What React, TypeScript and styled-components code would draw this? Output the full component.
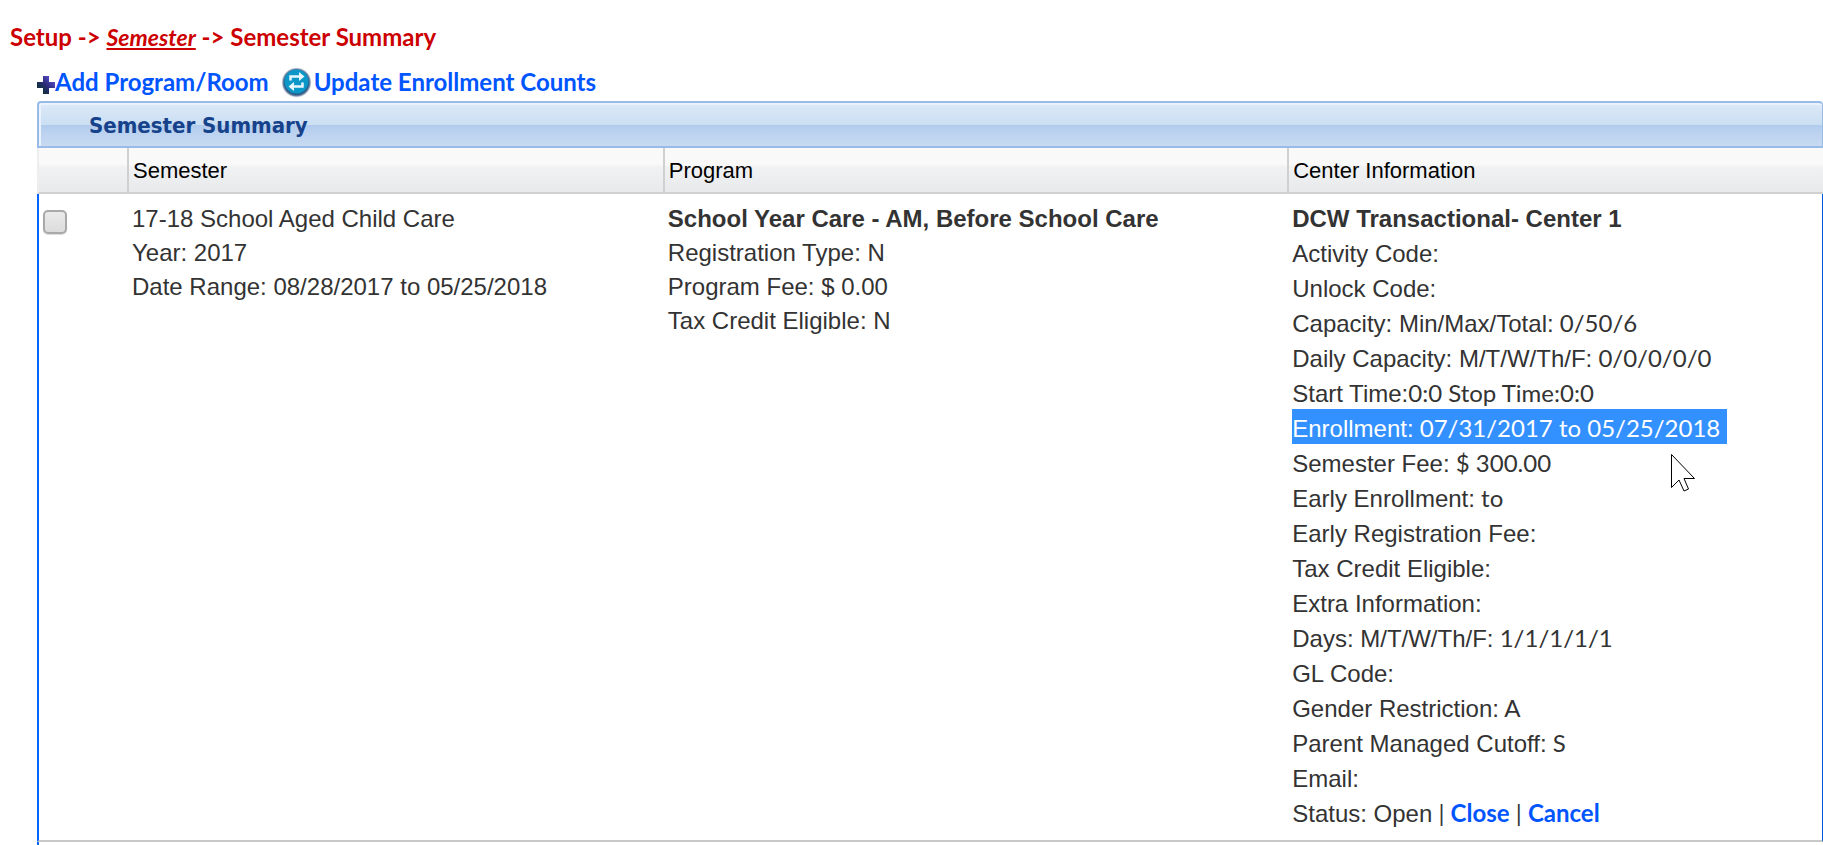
import React from "react";
import styled, { createGlobalStyle, css } from "styled-components";

const sans = `"Liberation Sans", Arial, sans-serif`;
const lato = `Lato, "Liberation Sans", sans-serif`;

const GlobalStyle = createGlobalStyle`
  *, *::before, *::after { box-sizing: border-box; }
  html { height: 100%; overflow: hidden; }
  body { margin: 0; background: #fff; color: #333; font-family: ${sans}; font-size: 24px; }
`;

const Page = styled.main`
  padding-left: 10px;
`;

const Breadcrumb = styled.nav`
  padding-top: 20px;
  font: 700 24px/34px ${lato};
  color: #cc0000;
`;

const CrumbLink = styled.a`
  color: inherit;
  font-size: 23px;
  font-style: italic;
  text-decoration: underline;
`;

const Panel = styled.section`
  padding: 10px 0 0 27px;
`;

const Toolbar = styled.div`
  display: flex;
  gap: 12px;
  height: 37px;
`;

const ToolLink = styled.a`
  display: flex;
  align-items: center;
  height: 36px;
  font: 700 24px/36px ${lato};
  color: #0055ff;
  text-decoration: none;
`;

const TitleBar = styled.h1`
  margin: 0;
  height: 47px;
  padding-left: 50px;
  border: 2px solid #99bbe8;
  border-right-width: 1px;
  border-radius: 4px 4px 0 0;
  box-shadow: inset 2px 2px 0 #eaf2fb;
  background: linear-gradient(#dce9f8, #cbdff3 50%, #b0caec 51%, #b8d0ef 62%, #c8daf2);
  font: 700 22px/46px "DejaVu Sans Condensed", "DejaVu Sans", Tahoma, sans-serif;
  color: #15428b;
`;

const Grid = styled.table`
  width: 100%;
  table-layout: fixed;
  border-collapse: separate;
  border-spacing: 0;
`;

const Col = styled.col<{ $w: string }>`
  width: ${(p) => p.$w};
`;

const HeadCell = styled.th<{ $first?: boolean }>`
  height: 46px;
  padding: 2px 4px 0;
  border-left: ${(p) => (p.$first ? "2px solid #eee" : "2px solid #d0d0d0")};
  border-bottom: 2px solid #d0d0d0;
  background: linear-gradient(#f9f9f9, #f9f9f9 38%, #f1f2f3 42%, #e8e9eb);
  font: 400 22px/42px ${sans};
  color: #000;
  text-align: left;
`;

const Cell = styled.td<{ $kind?: "first" | "last" }>`
  padding: 8px 0 11px 5px;
  border-bottom: 2px solid #c8c8c8;
  vertical-align: top;
  ${(p) => p.$kind === "first" && css`
    padding-top: 16px;
    padding-left: 4px;
    border-left: 2px solid #0066ff;
  `}
  ${(p) => p.$kind === "last" && css`
    padding-top: 5px;
    border-right: 1px solid #0055dd;
  `}
`;

const NextRow = styled.td`
  height: 4px;
  padding: 0;
  border-left: 2px solid #0066ff;
`;

const Check = styled.input`
  appearance: none;
  display: block;
  width: 24px;
  height: 24px;
  margin: 0;
  border: 2px solid #a9a9a9;
  border-radius: 5px;
  background: linear-gradient(#eaeaea, #dcdcdc);
  box-shadow: 0 1px 1px #ddd;
`;

const Line = styled.div<{ $bold?: boolean }>`
  height: 34px;
  line-height: 34px;
  font-weight: ${(p) => (p.$bold ? 700 : 400)};
  white-space: nowrap;
`;

const CenterLine = styled.div`
  height: 35px;
  font: 400 24px/37px ${lato};
  white-space: nowrap;
`;

const Label = styled.span<{ $bold?: boolean }>`
  font-family: ${sans};
  font-weight: ${(p) => (p.$bold ? 700 : 400)};
`;

const Selected = styled.mark`
  position: relative;
  display: block;
  width: fit-content;
  height: 35px;
  padding-right: 7px;
  background: #3390ff;
  color: #fff;
`;

const Pointer = styled.svg`
  position: absolute;
  top: 44px;
  right: 31px;
`;

const StatusLink = styled.a`
  font-weight: 700;
  color: #0055ff;
  text-decoration: none;
`;

const PlusIcon = () => (
  <svg width="18" height="24" viewBox="0 0 18 24" aria-hidden="true">
    <defs>
      <linearGradient id="plus" x1="0" y1="1" x2="1" y2="0">
        <stop offset="0.2" stopColor="#10303a" />
        <stop offset="0.5" stopColor="#2c2a78" />
        <stop offset="1" stopColor="#6a5cf0" />
      </linearGradient>
    </defs>
    <path d="M6 6h6v6h6v6h-6v6H6v-6H0v-6h6z" fill="url(#plus)" />
  </svg>
);

const RefreshIcon = () => (
  <svg width="33" height="32" viewBox="0 0 33 32" aria-hidden="true">
    <defs>
      <radialGradient id="halo">
        <stop offset="0.78" stopColor="#2c5c86" />
        <stop offset="0.88" stopColor="#7b91ad" />
        <stop offset="1" stopColor="#fff" stopOpacity="0" />
      </radialGradient>
    </defs>
    <circle cx="15.500" cy="16.500" r="15.500" fill="url(#halo)" />
    <circle cx="15.500" cy="15.500" r="12" fill="#0c97c9" />
    <g fill="none" stroke="#e6f7ff" strokeWidth="2.500">
      <path d="M9.500 14.500V10.500H20" />
      <path d="M21.500 16.500V20.500H11" />
    </g>
    <path d="M18 6l5.500 4.500L18 15zM13 16l-5.500 4.500L13 25z" fill="#e6f7ff" />
  </svg>
);

const details: [string, string][] = [
  ["Activity Code:", ""],
  ["Unlock Code:", ""],
  ["Capacity: Min/Max/Total:", "0/50/6"],
  ["Daily Capacity: M/T/W/Th/F:", "0/0/0/0/0"],
];

const moreDetails: [string, string][] = [
  ["Semester Fee:", "$ 300.00"],
  ["Early Enrollment:", "to"],
  ["Early Registration Fee:", ""],
  ["Tax Credit Eligible:", ""],
  ["Extra Information:", ""],
  ["Days: M/T/W/Th/F:", "1/1/1/1/1"],
  ["GL Code:", ""],
  ["Gender Restriction:", "A"],
  ["Parent Managed Cutoff:", "S"],
  ["Email:", ""],
];

const Detail = ({ label, value }: { label: string; value: string }) => (
  <CenterLine>
    <Label>{label}</Label> {value}
  </CenterLine>
);

export default function App() {
  return (
    <Page>
      <GlobalStyle />
      <Breadcrumb aria-label="Breadcrumb">
        Setup -&gt; <CrumbLink href="#semester">Semester</CrumbLink> -&gt; Semester Summary
      </Breadcrumb>
      <Panel>
        <Toolbar>
          <ToolLink href="#add"><PlusIcon />Add Program/Room</ToolLink>
          <ToolLink href="#update"><RefreshIcon />Update Enrollment Counts</ToolLink>
        </Toolbar>
        <TitleBar>Semester Summary</TitleBar>
        <Grid>
          <colgroup>
            <Col $w="90px" />
            <Col $w="30%" />
            <Col $w="auto" />
            <Col $w="30%" />
          </colgroup>
          <thead>
            <tr>
              <HeadCell $first />
              <HeadCell>Semester</HeadCell>
              <HeadCell>Program</HeadCell>
              <HeadCell>Center Information</HeadCell>
            </tr>
          </thead>
          <tbody>
            <tr>
              <Cell $kind="first">
                <Check type="checkbox" aria-label="Select 17-18 School Aged Child Care" />
              </Cell>
              <Cell>
                <Line>17-18 School Aged Child Care</Line>
                <Line>Year: 2017</Line>
                <Line>Date Range: 08/28/2017 to 05/25/2018</Line>
              </Cell>
              <Cell>
                <Line $bold>School Year Care - AM, Before School Care</Line>
                <Line>Registration Type: N</Line>
                <Line>Program Fee: $ 0.00</Line>
                <Line>Tax Credit Eligible: N</Line>
              </Cell>
              <Cell $kind="last">
                <CenterLine>
                  <Label $bold>DCW Transactional- Center 1</Label>
                </CenterLine>
                {details.map(([label, value]) => (
                  <Detail key={label} label={label} value={value} />
                ))}
                <CenterLine>
                  <Label>Start Time:</Label>0:0 Stop Time:0:0
                </CenterLine>
                <CenterLine>
                  <Selected>
                    <Label>Enrollment:</Label> 07/31/2017 to 05/25/2018
                    <Pointer width="26" height="40" viewBox="0 0 26 40" aria-hidden="true">
                      <path
                        d="M1.500 1.500V34.500L9 27l5 11 4.500-2-4.500-10.500h10.500z"
                        fill="#fff"
                        stroke="#000"
                      />
                    </Pointer>
                  </Selected>
                </CenterLine>
                {moreDetails.map(([label, value]) => (
                  <Detail key={label} label={label} value={value} />
                ))}
                <CenterLine>
                  <Label>Status: Open</Label> | <StatusLink href="#close">Close</StatusLink> |{" "}
                  <StatusLink href="#cancel">Cancel</StatusLink>
                </CenterLine>
              </Cell>
            </tr>
            <tr>
              <NextRow colSpan={4} />
            </tr>
          </tbody>
        </Grid>
      </Panel>
    </Page>
  );
}
